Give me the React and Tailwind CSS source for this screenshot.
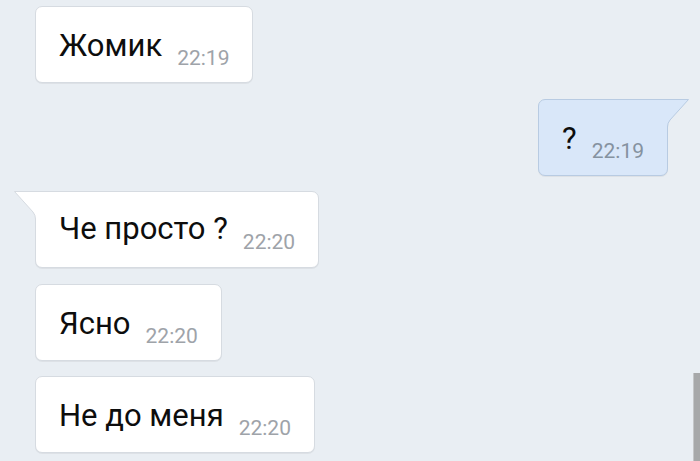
import React from "react";

function TailIn() {
  return (
    <svg
      className="absolute left-[-22px] top-[-1px]"
      width="24"
      height="32"
      viewBox="0 0 24 32"
    >
      <path
        d="M0.5 0.5 L24 0.5 L24 32 L21.5 32 L21.5 28 Q21.5 24 19 21 L0.5 0.5 Z"
        fill="#ffffff"
      />
      <path
        d="M21.5 32 L21.5 28 Q21.5 24 19 21 L0.5 0.5 L24 0.5"
        fill="none"
        stroke="#d6dbe1"
        strokeWidth="1"
      />
    </svg>
  );
}

function TailOut() {
  return (
    <svg
      className="absolute right-[-22px] top-[-1px]"
      width="24"
      height="32"
      viewBox="0 0 24 32"
    >
      <path
        d="M23.5 0.5 L0 0.5 L0 32 L2.5 32 L2.5 28 Q2.5 24 5 21 L23.5 0.5 Z"
        fill="#d9e7f9"
      />
      <path
        d="M2.5 32 L2.5 28 Q2.5 24 5 21 L23.5 0.5 L0 0.5"
        fill="none"
        stroke="#b8cbe2"
        strokeWidth="1"
      />
    </svg>
  );
}

function Bubble({ text, time, out, tail, textPt = "pt-[23px]", timeMt = "mt-[18px]" }) {
  return (
    <div
      className={
        "relative flex h-[77px] items-start rounded-[7px] border px-[23px] shadow-[0_1px_0_rgba(0,0,0,0.05)] " +
        (out
          ? "self-end mr-[32px] border-[#b8cbe2] bg-[#d9e7f9] rounded-tr-none "
          : "self-start ml-[35px] border-[#d6dbe1] bg-white ") +
        (tail && !out ? "rounded-tl-none " : "") +
        textPt
      }
    >
      {tail && !out && <TailIn />}
      {tail && out && <TailOut />}
      <span className="text-[31px] leading-[31px] text-[#0d0d0d] mr-[15px]">
        {text}
      </span>
      <span
        className={
          timeMt +
          " text-[21px] leading-[21px] " +
          (out ? "text-[#8592a0]" : "text-[#9ea3a9]")
        }
      >
        {time}
      </span>
    </div>
  );
}

export default function App() {
  return (
    <div
      className="relative w-full h-[461px] overflow-hidden bg-[#e9eef3]"
      style={{ fontFamily: "Roboto, 'Noto Sans', sans-serif" }}
    >
      <div className="flex flex-col gap-[15.5px] pt-[6px]">
        <Bubble text="Жомик" time="22:19" />
        <Bubble text="?" time="22:19" out tail />
        <Bubble text="Че просто ?" time="22:20" tail textPt="pt-[21px]" timeMt="mt-[19px]" />
        <Bubble text="Ясно" time="22:20" />
        <Bubble text="Не до меня" time="22:20" />
      </div>
      <div className="absolute right-0 top-[373px] h-[88px] w-[7px] border-l border-[#c4c6c8] bg-[#a7a8a9]" />
    </div>
  );
}
